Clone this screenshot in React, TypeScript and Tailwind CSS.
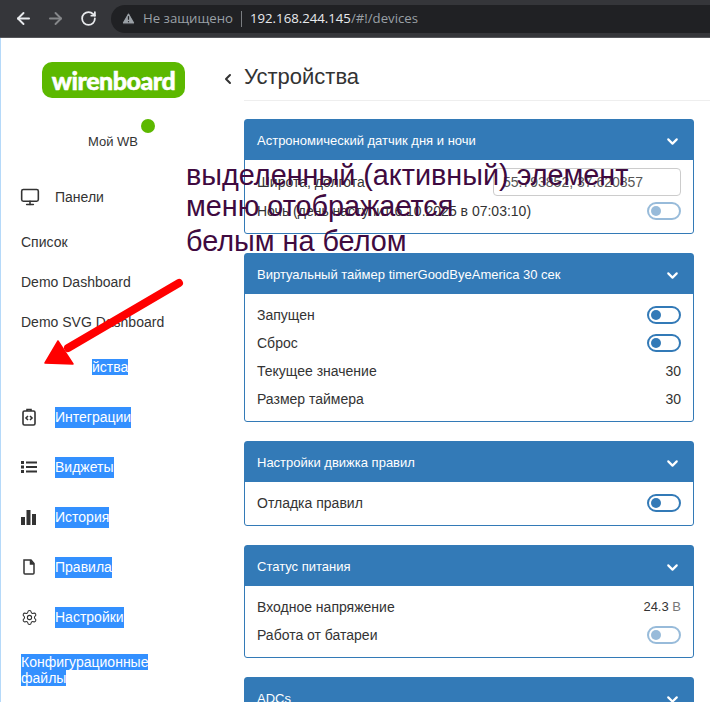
import { ChevronDown, ChevronLeft, ArrowLeft, ArrowRight, RotateCw, TriangleAlert, Monitor, Settings } from "lucide-react";
import type { ReactNode } from "react";

const Toggle = ({ dim }: { dim?: boolean }) => (
  <span
    className={`flex h-[18px] w-[34px] items-center rounded-full border-2 border-[#337ab7] pl-[2px] ${dim ? "opacity-50" : ""}`}
  >
    <span className="h-[10px] w-[10px] rounded-full bg-[#337ab7]" />
  </span>
);

const Row = ({ label, children }: { label: string; children: ReactNode }) => (
  <div className="flex h-7 items-center justify-between">
    <span>{label}</span>
    {children}
  </div>
);

const Panel = ({ title, children }: { title: string; children?: ReactNode }) => (
  <section className="mb-[19px] rounded-[3px] border border-[#337ab7] bg-white">
    <header className="flex h-10 items-center justify-between bg-[#337ab7] px-3 pt-[2px] text-[13px] text-white">
      <span>{title}</span>
      <ChevronDown size={17} strokeWidth={3} />
    </header>
    {children && <div className="px-3 pb-2 pt-[7px]">{children}</div>}
  </section>
);

const Sel = ({ children }: { children: ReactNode }) => (
  <span className="bg-[#3390ff] text-white">{children}</span>
);

const NavItem = ({ icon, children }: { icon: ReactNode; children: ReactNode }) => (
  <div className="flex h-[50px] items-center pl-5">
    <span className="flex w-[34px] text-[#333]">{icon}</span>
    {children}
  </div>
);

const App = () => {
  return (
    <div className="relative h-[702px] w-[710px] overflow-hidden bg-white font-['Liberation_Sans',Arial,sans-serif] text-[14px] text-[#333]">
      <div className="flex h-[38px] items-center border-b border-[#55565a] bg-[#35363a] pl-[14px] text-white">
        <ArrowLeft size={19} strokeWidth={2.4} className="text-[#e8eaed]" />
        <ArrowRight size={19} strokeWidth={2.4} className="ml-[13px] text-[#85878a]" />
        <RotateCw size={17} strokeWidth={2.5} className="ml-[15px] text-[#e8eaed]" />
        <div className="ml-[14px] flex h-7 flex-1 items-center rounded-l-full bg-[#202124] pl-[10px] font-['Open_Sans',sans-serif] text-[13.2px]">
          <TriangleAlert size={15} fill="#9aa0a6" stroke="#202124" />
          <span className="ml-[7px] text-[#9aa0a6]">Не защищено</span>
          <span className="mx-[8px] h-[16px] w-px bg-[#7a7d81]" />
          <span className="text-[#e8eaed]">192.168.244.145</span>
          <span className="text-[#9aa0a6]">/#!/devices</span>
        </div>
      </div>

      <div className="flex border-l border-[#b5d9f9]">
        <aside className="w-[243px] shrink-0">
          <div className="ml-[41px] mt-6 flex h-9 w-[143px] items-center justify-center rounded-[10px] bg-[#5cb800] font-['Lato',sans-serif] text-[25px] font-black leading-none tracking-[-0.5px] text-white [-webkit-text-stroke:0.5px_white]">
            wirenboard
          </div>
          <div className="relative mt-[34px] h-[18px] pl-[87px] text-[13px]">
            Мой WB
            <span className="absolute left-[140px] top-[-13px] h-[14px] w-[14px] rounded-full bg-[#5cb800]" />
          </div>
          <div className="mt-[22px]">
            <NavItem
              icon={
                <span className="-ml-px flex">
                  <Monitor size={20} strokeWidth={1.9} />
                </span>
              }
            >
              <span>Панели</span>
            </NavItem>
          </div>
          <div className="flex flex-col pl-5 text-[14px]">
            <span className="flex h-10 items-center">Список</span>
            <span className="flex h-10 items-center">Demo Dashboard</span>
            <span className="flex h-10 items-center">Demo SVG Dashboard</span>
          </div>
          <div className="flex h-[50px] items-center pl-[54px] leading-4">
            <span className="text-white">Устро</span>
            <Sel>йства</Sel>
          </div>
          <NavItem
            icon={
              <svg width="16" height="18" viewBox="0 0 16 18" fill="none" stroke="#333" strokeWidth="1.6">
                <rect x="2" y="3" width="12" height="14" rx="1.5" />
                <path d="M6 3V1.5h4V3M7 8l-2 2 2 2M9 8l2 2-2 2" />
              </svg>
            }
          >
            <Sel>Интеграции</Sel>
          </NavItem>
          <NavItem
            icon={
              <svg width="16" height="14" viewBox="0 0 16 14" fill="#333">
                <rect x="0" y="1" width="3" height="3" />
                <rect x="0" y="5.5" width="3" height="3" />
                <rect x="0" y="10" width="3" height="3" />
                <rect x="5" y="1.5" width="11" height="2" />
                <rect x="5" y="6" width="11" height="2" />
                <rect x="5" y="10.5" width="11" height="2" />
              </svg>
            }
          >
            <Sel>Виджеты</Sel>
          </NavItem>
          <NavItem
            icon={
              <svg width="15" height="15" viewBox="0 0 15 15" fill="#333">
                <rect x="0" y="7" width="4" height="8" />
                <rect x="5.5" y="0" width="4" height="15" />
                <rect x="11" y="4" width="4" height="11" />
              </svg>
            }
          >
            <Sel>История</Sel>
          </NavItem>
          <NavItem
            icon={
              <svg width="16" height="16" viewBox="0 0 16 16" fill="none" stroke="#333" strokeWidth="1.5">
                <path d="M3 1h7l3 3.5V14a1 1 0 0 1-1 1H4a1 1 0 0 1-1-1V1Z" />
                <path d="M9.5 1v4H13" fill="#333" />
              </svg>
            }
          >
            <Sel>Правила</Sel>
          </NavItem>
          <NavItem icon={<Settings size={17} strokeWidth={1.5} />}>
            <Sel>Настройки</Sel>
          </NavItem>
          <div className="mt-3 w-[140px] pl-5 leading-4">
            <Sel>Конфигурационные файлы</Sel>
          </div>
        </aside>

        <main className="min-w-0 flex-1">
          <div className="relative mb-[18px] mt-[25px] h-[38px] border-b border-[#eee] text-[22px] leading-[28px]">
            <ChevronLeft size={16} strokeWidth={3} className="absolute left-[-24px] top-[8px]" />
            Устройства
          </div>
          <div className="w-[450px]">
            <Panel title="Астрономический датчик дня и ночи">
              <div className="my-px flex h-7 items-center justify-between">
                <span>Широта, долгота</span>
                <span className="flex h-7 w-[188px] items-center rounded border border-[#ccc] pl-[9px] text-[#555]">
                  55.793852, 37.620857
                </span>
              </div>
              <Row label="Ночь (день наступит 6.10.2025 в 07:03:10)">
                <Toggle dim />
              </Row>
            </Panel>
            <Panel title="Виртуальный таймер timerGoodByeAmerica 30 сек">
              <Row label="Запущен">
                <Toggle />
              </Row>
              <Row label="Сброс">
                <Toggle />
              </Row>
              <Row label="Текущее значение">
                <span>30</span>
              </Row>
              <Row label="Размер таймера">
                <span>30</span>
              </Row>
            </Panel>
            <Panel title="Настройки движка правил">
              <Row label="Отладка правил">
                <Toggle />
              </Row>
            </Panel>
            <Panel title="Статус питания">
              <Row label="Входное напряжение">
                <span className="text-[13px]">
                  24.3 <span className="text-[#777]">В</span>
                </span>
              </Row>
              <Row label="Работа от батареи">
                <Toggle dim />
              </Row>
            </Panel>
            <Panel title="ADCs" />
          </div>
        </main>
      </div>

      {/* annotation pasted on top of the screenshot */}
      <div className="absolute left-[186px] top-[160px] w-[480px] text-[28.8px] leading-[31px] text-[#3f0a40]">
        выделенный (активный) элемент
        <br />
        меню отображается
        <br />
        <span className="relative top-[4px]">белым на белом</span>
      </div>
      <svg className="absolute left-[40px] top-[270px]" width="150" height="100" viewBox="0 0 150 100">
        <path d="M139 13 L28 78" stroke="#ff0000" strokeWidth="8" strokeLinecap="round" />
        <path d="M18 71 L5 93 L33 94 Z" fill="#ff0000" stroke="#ff0000" strokeWidth="1.5" strokeLinejoin="round" />
      </svg>
    </div>
  );
};

export default App;
